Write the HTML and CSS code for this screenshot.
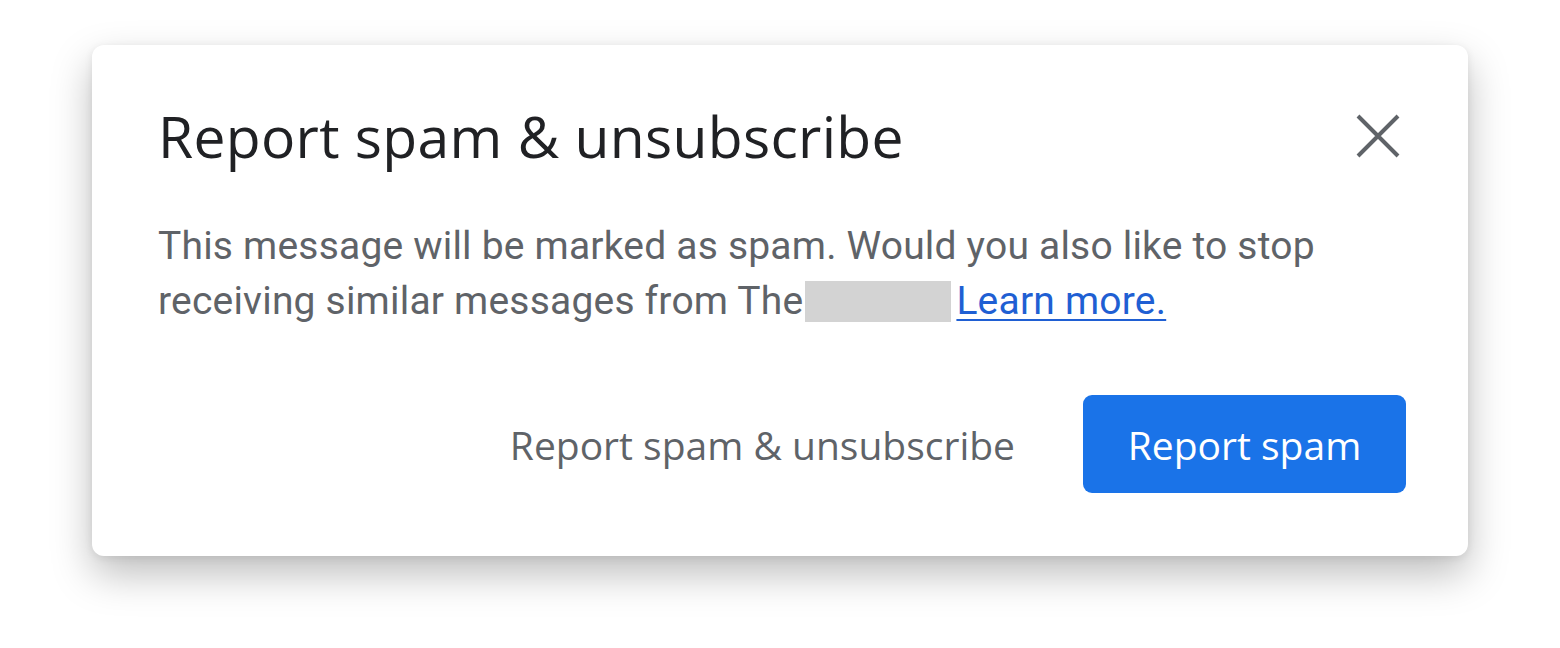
FILE: index.html
```html
<!DOCTYPE html>
<html>
<head>
    <meta charset="UTF-8">
    <link rel="stylesheet" href="styles.css">
</head>
<body>
    <div class="dialog">
        <div class="dialog-head">
            <h1 class="title">Report spam &amp; unsubscribe</h1>
            <button class="close" aria-label="Close">
                <svg width="48" height="48" viewBox="0 0 48 48">
                    <path d="M4 4 L44 44 M44 4 L4 44" stroke="#5f6368" stroke-width="4" fill="none"/>
                </svg>
            </button>
        </div>
        <p class="message">
            This message will be marked as spam. Would you also like to stop<br>
            receiving similar messages from The<span class="redacted"></span><a href="#" class="learn">Learn more.</a>
        </p>
        <div class="actions">
            <button class="btn btn-text">Report spam &amp; unsubscribe</button>
            <button class="btn btn-primary">Report spam</button>
        </div>
    </div>
</body>
</html>
```

FILE: styles.css
```css
body {
    margin: 0;
    height: 648px;
    overflow: hidden;
    background: #ffffff;
    font-family: Roboto, "Liberation Sans", sans-serif;
}

.dialog {
    box-sizing: border-box;
    width: 1376px;
    height: 511px;
    margin: 45px 0 0 92px;
    padding: 0 62px 0 66px;
    background: #ffffff;
    border-radius: 12px;
    box-shadow: 0 18px 40px rgba(0, 0, 0, 0.26), 0 2px 8px rgba(0, 0, 0, 0.08);
    display: flex;
    flex-direction: column;
}

.dialog-head {
    display: flex;
    justify-content: space-between;
    align-items: flex-start;
    padding-top: 53px;
}

.title {
    margin: 0;
    font-family: "Open Sans", sans-serif;
    font-weight: 400;
    font-size: 57px;
    line-height: 76px;
    color: #202124;
    letter-spacing: 0.3px;
}

.close {
    border: 0;
    background: none;
    padding: 0;
    margin: 14px 4px 0 0;
    width: 48px;
    height: 48px;
}

.close svg {
    display: block;
}

.message {
    margin: 45px 0 0 0;
    font-size: 39px;
    line-height: 55px;
    letter-spacing: 0.2px;
    color: #5f6368;
    white-space: nowrap;
}

.redacted {
    display: inline-block;
    width: 146px;
    height: 41px;
    background: #d3d3d3;
    vertical-align: -8px;
    margin: 0 5px 0 2px;
}

.learn {
    color: #1f5fd3;
    text-decoration: underline;
    text-underline-offset: 5px;
    text-decoration-thickness: 2px;
}

.actions {
    display: flex;
    justify-content: flex-end;
    align-items: center;
    gap: 68px;
    margin-top: 66px;
}

.btn {
    border: 0;
    font-family: "Open Sans", sans-serif;
    font-size: 39px;
    font-weight: 500;
    cursor: pointer;
}

.btn-text {
    background: none;
    color: #5f6368;
    padding: 0;
}

.btn-primary {
    background: #1a73e8;
    color: #ffffff;
    width: 323px;
    height: 98px;
    border-radius: 9px;
}
```
